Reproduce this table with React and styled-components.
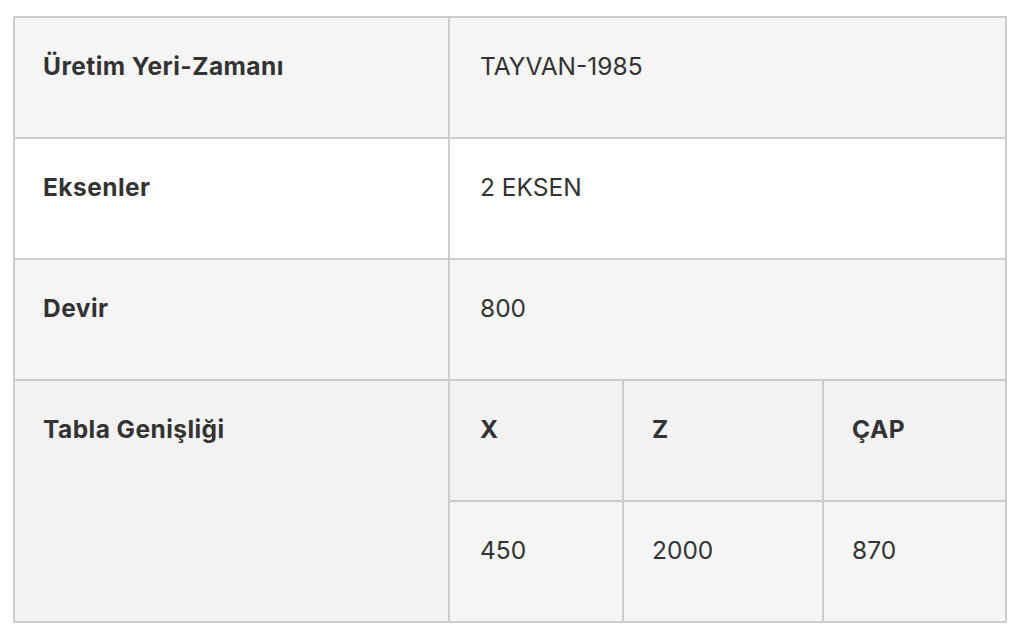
import React from "react";
import styled, { createGlobalStyle } from "styled-components";

const Global = createGlobalStyle`
  html, body { margin: 0; padding: 0; background: #ffffff; }
  body { font-family: Inter, "Noto Sans", "Liberation Sans", sans-serif; color: #333333; }
`;

const Page = styled.div`
  padding: 16px 17px 0 13px;
`;

const Table = styled.table`
  width: 994px;
  border-collapse: collapse;
  table-layout: fixed;
  font-size: 24.5px;
  line-height: 40px;
  border: 2px solid #cdcdcd;
`;

const Row = styled.tr`
  background: ${(p) => p.$bg};
`;

const Label = styled.th`
  text-align: left;
  vertical-align: top;
  font-weight: 700;
  letter-spacing: 0.45px;
  padding: 28px 28px 51px;
  border: 2px solid #cdcdcd;
`;

const Value = styled.td`
  vertical-align: top;
  font-weight: 400;
  padding: ${(p) => (p.$nested ? "0" : "28px 28px 51px 30px")};
  border: 2px solid #cdcdcd;
`;

const Inner = styled.table`
  width: 100%;
  border-collapse: collapse;
  table-layout: fixed;
  font-size: 24.5px;
  line-height: 40px;
`;

const InnerHead = styled.th`
  text-align: left;
  vertical-align: top;
  font-weight: 700;
  letter-spacing: 0.45px;
  padding: 28px 28px 51px ${(p) => (p.$first ? "30px" : "28px")};
  background: #f2f2f2;
  border-left: ${(p) => (p.$first ? "none" : "2px solid #cdcdcd")};
  border-bottom: 2px solid #cdcdcd;
`;

const InnerCell = styled.td`
  vertical-align: top;
  padding: 28px 28px 51px ${(p) => (p.$first ? "30px" : "28px")};
  background: #f5f5f5;
  border-left: ${(p) => (p.$first ? "none" : "2px solid #cdcdcd")};
`;

const rows = [
  { label: "Üretim Yeri-Zamanı", value: "TAYVAN-1985", bg: "#f5f5f5" },
  { label: "Eksenler", value: "2 EKSEN", bg: "#ffffff" },
  { label: "Devir", value: "800", bg: "#f5f5f5" },
];

const dims = [
  { head: "X", val: "450", w: "173px" },
  { head: "Z", val: "2000", w: "200px" },
  { head: "ÇAP", val: "870", w: "auto" },
];

export default function App() {
  return (
    <>
      <Global />
      <Page>
        <Table>
          <colgroup>
            <col style={{ width: "435px" }} />
            <col />
          </colgroup>
          <tbody>
            {rows.map((r) => (
              <Row key={r.label} $bg={r.bg}>
                <Label>{r.label}</Label>
                <Value>{r.value}</Value>
              </Row>
            ))}
            <Row $bg="#f2f2f2">
              <Label>Tabla Genişliği</Label>
              <Value $nested>
                <Inner>
                  <colgroup>
                    {dims.map((d) => (
                      <col key={d.head} style={{ width: d.w }} />
                    ))}
                  </colgroup>
                  <tbody>
                    <tr>
                      {dims.map((d, i) => (
                        <InnerHead key={d.head} $first={i === 0}>
                          {d.head}
                        </InnerHead>
                      ))}
                    </tr>
                    <tr>
                      {dims.map((d, i) => (
                        <InnerCell key={d.head} $first={i === 0}>
                          {d.val}
                        </InnerCell>
                      ))}
                    </tr>
                  </tbody>
                </Inner>
              </Value>
            </Row>
          </tbody>
        </Table>
      </Page>
    </>
  );
}
